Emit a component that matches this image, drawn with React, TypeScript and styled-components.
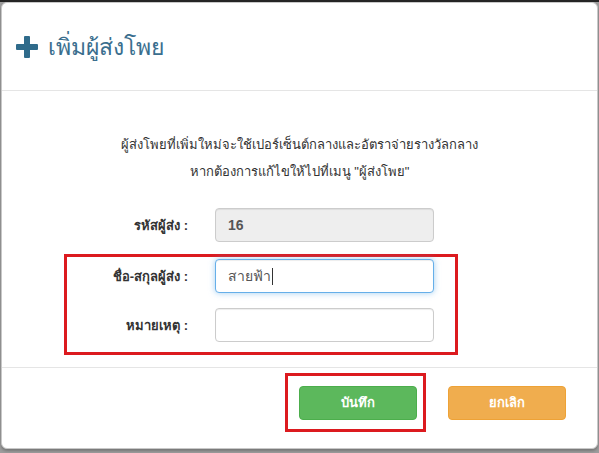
import React from "react";
import styled, { createGlobalStyle } from "styled-components";

const Global = createGlobalStyle`
  html, body { margin: 0; padding: 0; }
  body {
    width: 599px;
    height: 453px;
    overflow: hidden;
    background: linear-gradient(#252525 0 2px, #9d9d9d 2px);
    font-family: Tahoma, "Liberation Sans", sans-serif;
    color: #333;
  }
`;

const Modal = styled.div`
  box-sizing: border-box;
  margin: 2px 1px 0 1px;
  width: 597px;
  height: 447px;
  background: #fff;
  border: 1px solid #c8c8c8;
  border-radius: 6px;
  display: flex;
  flex-direction: column;
  box-shadow: 0 2px 3px rgba(0, 0, 0, 0.25);
`;

const Header = styled.div`
  box-sizing: border-box;
  height: 88px;
  border-bottom: 1px solid #e5e5e5;
  display: flex;
  align-items: center;
  gap: 10px;
  padding-left: 14px;
  color: #31708f;
`;

const Title = styled.h4`
  margin: 0;
  font-size: 23px;
  font-weight: normal;
  color: #3a6e8e;
  line-height: 1;
  padding-top: 2px;
`;

const Body = styled.div`
  box-sizing: border-box;
  height: 277px;
  border-bottom: 1px solid #e5e5e5;
  padding-top: 40px;
`;

const Note = styled.p`
  margin: 0 0 23px;
  text-align: center;
  font-size: 13px;
  line-height: 27px;
`;

const Row = styled.div<{ $mb?: number }>`
  display: flex;
  align-items: center;
  margin-left: 67px;
  margin-bottom: ${(p) => p.$mb ?? 0}px;
`;

const Label = styled.label`
  width: 119px;
  text-align: right;
  font-size: 13px;
  font-weight: bold;
  margin-right: 27px;
`;

const Input = styled.div<{ $disabled?: boolean; $focus?: boolean; $bold?: boolean }>`
  box-sizing: border-box;
  width: 219px;
  height: 34px;
  border: 1px solid ${(p) => (p.$focus ? "#66afe9" : "#ccc")};
  border-radius: 4px;
  background: ${(p) => (p.$disabled ? "#eee" : "#fff")};
  box-shadow: ${(p) =>
    p.$focus
      ? "inset 0 1px 1px rgba(0,0,0,.075), 0 0 6px rgba(102,175,233,.6)"
      : "inset 0 1px 1px rgba(0,0,0,.075)"};
  display: flex;
  align-items: center;
  padding-left: 12px;
  font-size: 14px;
  font-weight: ${(p) => (p.$bold ? "bold" : "normal")};
  color: #555;
`;

const Caret = styled.span`
  display: inline-block;
  width: 1px;
  height: 17px;
  background: #333;
  margin-left: 1px;
`;

const Highlight = styled.div`
  box-sizing: border-box;
  width: 394px;
  margin-left: 62px;
  margin-top: 12px;
  border: 3px solid #dc1a1f;
  padding: 2px 0 10px;
  & > ${Row} {
    margin-left: 2px;
  }
`;

const Footer = styled.div`
  display: flex;
  justify-content: flex-end;
  align-items: center;
  gap: 22px;
  padding: 5px 31px 0 0;
`;

const ButtonFrame = styled.div`
  box-sizing: border-box;
  width: 141px;
  height: 59px;
  border: 3px solid #dc1a1f;
  display: flex;
  align-items: center;
  padding-left: 11px;
`;

const Button = styled.button<{ $variant: "success" | "warning" }>`
  box-sizing: border-box;
  width: 118px;
  height: 34px;
  border-radius: 4px;
  border: 1px solid ${(p) => (p.$variant === "success" ? "#4cae4c" : "#eea236")};
  background: ${(p) => (p.$variant === "success" ? "#5cb85c" : "#f0ad4e")};
  color: #fff;
  font-family: inherit;
  font-size: 13px;
  font-weight: bold;
  padding: 0;
`;

const PlusIcon = () => (
  <svg width="22" height="22" viewBox="0 0 22 22" aria-hidden="true">
    <rect x="8" y="0" width="6" height="22" rx="1" fill="#2f6b8b" />
    <rect x="0" y="8" width="22" height="6" rx="1" fill="#2f6b8b" />
  </svg>
);

export default function App() {
  return (
    <>
      <Global />
      <Modal>
        <Header>
          <PlusIcon />
          <Title>เพิ่มผู้ส่งโพย</Title>
        </Header>
        <Body>
          <Note>
            ผู้ส่งโพยที่เพิ่มใหม่จะใช้เปอร์เซ็นต์กลางและอัตราจ่ายรางวัลกลาง
            <br />
            หากต้องการแก้ไขให้ไปที่เมนู "ผู้ส่งโพย"
          </Note>
          <Row>
            <Label>รหัสผู้ส่ง :</Label>
            <Input $disabled $bold>16</Input>
          </Row>
          <Highlight>
            <Row $mb={15}>
              <Label>ชื่อ-สกุลผู้ส่ง :</Label>
              <Input $focus>
                สายฟ้า
                <Caret />
              </Input>
            </Row>
            <Row>
              <Label>หมายเหตุ :</Label>
              <Input />
            </Row>
          </Highlight>
        </Body>
        <Footer>
          <ButtonFrame>
            <Button $variant="success">บันทึก</Button>
          </ButtonFrame>
          <Button $variant="warning">ยกเลิก</Button>
        </Footer>
      </Modal>
    </>
  );
}
